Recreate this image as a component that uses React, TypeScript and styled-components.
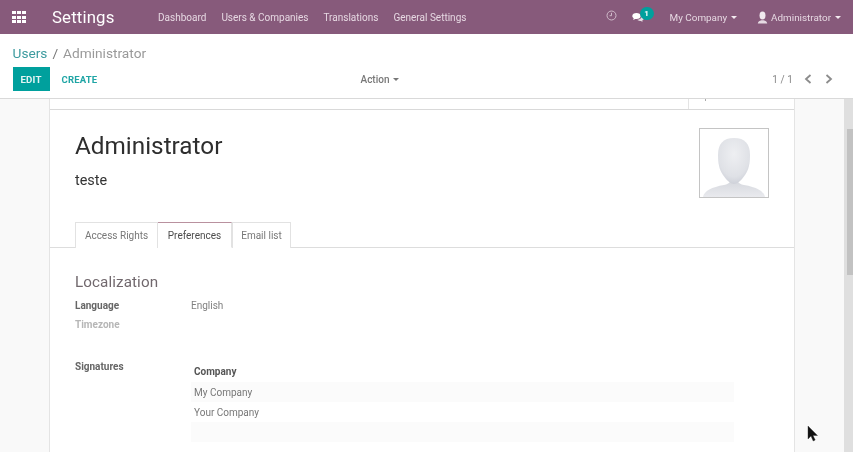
import React from 'react';
import styled, { createGlobalStyle } from 'styled-components';

const GlobalStyle = createGlobalStyle`
  html, body {
    margin: 0;
    padding: 0;
    overflow: hidden;
    background: #fff;
  }
  body {
    font-family: Roboto, "Noto Sans", sans-serif;
    font-size: 10px;
    color: #666;
  }
`;

const Page = styled.div`
  position: relative;
  width: 853px;
  height: 452px;
  display: flex;
  flex-direction: column;
  overflow: hidden;
  filter: blur(0.35px);
`;

const NavBar = styled.header`
  height: 34px;
  flex: none;
  display: flex;
  align-items: center;
  background: #875a7b;
  color: #fff;
`;

const AppsButton = styled.div`
  width: 14px;
  height: 12px;
  margin: 0 26px 0 12px;
  display: grid;
  grid-template-columns: repeat(3, 4px);
  grid-auto-rows: 3px;
  gap: 1.5px 1px;
`;

const AppsDot = styled.span`
  background: #fff;
`;

const BrandName = styled.div`
  width: 106px;
  font-size: 16.8px;
  line-height: 34px;
  letter-spacing: 0.15px;
`;

const NavMenu = styled.nav`
  display: flex;
  gap: 15px;
  flex: 1;
`;

const NavLink = styled.span`
  font-size: 10px;
  color: #e6d8e2;
`;

const NavTools = styled.div`
  display: flex;
  align-items: center;
`;

const ClockWrap = styled.div`
  display: flex;
  margin: -3px 15px 0 0;
  color: #d0bbca;
`;

const Messages = styled.div`
  position: relative;
  display: flex;
  width: 22px;
  margin-right: 16px;
`;

const Badge = styled.span`
  position: absolute;
  left: 8px;
  top: -5px;
  width: 14px;
  height: 13px;
  border-radius: 7px;
  background: #00a09d;
  color: #fff;
  font-size: 8px;
  font-weight: 700;
  line-height: 13px;
  text-align: center;
`;

const UserMenu = styled.span<{ $gap: number }>`
  display: flex;
  align-items: center;
  font-size: 9.9px;
  color: #e6d8e2;
  margin-right: ${p => p.$gap}px;
`;

const Caret = styled.i<{ $color?: string }>`
  display: inline-block;
  width: 0;
  height: 0;
  margin-left: 4px;
  border-top: 3px solid ${p => p.$color || '#f3eaf0'};
  border-left: 3px solid transparent;
  border-right: 3px solid transparent;
`;

const ControlPanel = styled.section`
  height: 65px;
  flex: none;
  box-sizing: border-box;
  padding: 0 20px 0 12.5px;
  background: #fff;
  border-bottom: 1px solid #d9d9d9;
`;

const Breadcrumb = styled.div`
  height: 33px;
  box-sizing: border-box;
  padding-top: 5px;
  display: flex;
  align-items: center;
  font-size: 13.7px;
  color: #999;
`;

const BreadcrumbLink = styled.span`
  color: #3d9b9f;
`;

const BreadcrumbSep = styled.span`
  margin: 0 5px;
  color: #777;
`;

const ActionRow = styled.div`
  display: grid;
  grid-template-columns: 348px auto 1fr;
  align-items: center;
`;

const ButtonGroup = styled.div`
  display: flex;
  align-items: center;
`;

const EditButton = styled.button`
  width: 37px;
  height: 24px;
  padding: 0;
  border: 0;
  background: #00a09d;
  color: #e3f4f3;
  font: 700 9.7px Roboto, sans-serif;
  letter-spacing: 0.2px;
`;

const CreateButton = styled.span`
  margin-left: 12px;
  color: #1fa5a5;
  font-size: 9.5px;
  font-weight: 700;
  letter-spacing: 0.2px;
`;

const ActionMenu = styled.span`
  display: flex;
  align-items: center;
  color: #777;
  font-size: 10px;
  font-weight: 500;
`;

const Pager = styled.div`
  justify-self: end;
  display: flex;
  align-items: center;
  color: #888;
  font-size: 10px;
  letter-spacing: 0.1px;
`;

const PagerArrows = styled.div`
  display: flex;
  gap: 13px;
  margin-left: 11px;
`;

const Body = styled.main`
  flex: 1;
  min-height: 0;
  display: flex;
  background: #f9f9f9;
`;

const Scroller = styled.div`
  flex: 1;
  display: flex;
  padding-left: 49px;
  min-width: 0;
`;

const Sheet = styled.article`
  width: 746px;
  flex: none;
  background: #fff;
  border-left: 1px solid #e4e4e4;
  border-right: 1px solid #e4e4e4;
  box-sizing: border-box;
`;

const ButtonBox = styled.div`
  height: 10px;
  border-bottom: 1px solid #d9d9d9;
  display: flex;
  justify-content: flex-end;
`;

const StatButtonEdge = styled.div`
  width: 105px;
  border-left: 1px solid #e4e4e4;
  position: relative;

  &::after {
    content: '';
    position: absolute;
    left: 16px;
    top: 0;
    width: 1px;
    height: 2px;
    background: #aaa;
  }
`;

const SheetHead = styled.div`
  display: flex;
  justify-content: space-between;
  height: 94px;
  padding: 18px 25px 0 25px;
`;

const Title = styled.h1`
  margin: 0;
  font-size: 24.3px;
  font-weight: 400;
  line-height: 36px;
  color: #2e2e2e;
`;

const SubTitle = styled.div`
  margin-top: 7px;
  font-size: 14.4px;
  line-height: 20px;
  color: #333;
`;

const Avatar = styled.div`
  width: 70px;
  height: 70px;
  box-sizing: border-box;
  border: 1px solid #c4c4c4;
  background: #fff;
  overflow: hidden;
`;

const TabBar = styled.div`
  height: 26px;
  box-sizing: border-box;
  display: flex;
  padding-left: 25px;
  border-bottom: 1px solid #ddd;
`;

const Tab = styled.div<{ $active?: boolean; $width: number }>`
  width: ${p => p.$width}px;
  height: 26px;
  box-sizing: border-box;
  display: flex;
  align-items: center;
  justify-content: center;
  font-size: 10px;
  color: ${p => (p.$active ? '#4c4c4c' : '#777')};
  background: #fff;
  border: 1px solid #e2e2e2;
  border-left-width: ${p => (p.$active ? 0 : 1)}px;
  border-top: ${p => (p.$active ? '1px solid #b9919f' : '1px solid #e2e2e2')};
  border-bottom: ${p => (p.$active ? '1px solid #fff' : '0')};
`;

const TabBody = styled.div`
  padding: 23px 60px 0 25px;
`;

const GroupTitle = styled.h2`
  margin: 0;
  font-size: 15.2px;
  font-weight: 400;
  line-height: 22px;
  color: #71686d;
  letter-spacing: 0.1px;
`;

const FieldRow = styled.div<{ $height: number }>`
  display: grid;
  grid-template-columns: 116px 1fr;
  height: ${p => p.$height}px;
  align-items: start;
`;

const FieldLabel = styled.label<{ $muted?: boolean }>`
  font-size: 10px;
  font-weight: 700;
  line-height: 14px;
  color: ${p => (p.$muted ? '#b6b6b6' : '#666')};
`;

const FieldValue = styled.span`
  font-size: 10px;
  line-height: 14px;
  color: #808080;
`;

const Fields = styled.div`
  margin-top: 6px;
`;

const SignatureTable = styled.table`
  width: 543px;
  margin-top: 1px;
  border-collapse: collapse;
  font-size: 10px;
`;

const HeadCell = styled.th`
  height: 21px;
  padding: 0 3px;
  text-align: left;
  font-weight: 700;
  color: #555;
`;

const Cell = styled.td<{ $shaded?: boolean }>`
  height: 20px;
  padding: 0 3px;
  color: #777;
  background: ${p => (p.$shaded ? '#fbfbfb' : '#fff')};
`;

const ScrollTrack = styled.div`
  width: 9px;
  flex: none;
  background: #dfdfdf;
  display: flex;
  justify-content: flex-end;
`;

const ScrollThumb = styled.div`
  width: 6px;
  height: 146px;
  margin-top: 30px;
  background: #c2c2c2;
`;

const Pointer = styled.svg`
  position: absolute;
  left: 807px;
  top: 426px;
`;

const Chevron: React.FC<{ dir: 'left' | 'right' }> = ({ dir }) => (
  <svg width="8" height="10" viewBox="0 0 8 10" fill="none" stroke="#8c8c8c" strokeWidth="1.8">
    <path d={dir === 'left' ? 'M6.5 1 2 5l4.5 4' : 'M1.5 1 6 5 1.5 9'} />
  </svg>
);

const AvatarArt: React.FC = () => (
  <svg width="68" height="68" viewBox="0 0 68 68">
    <defs>
      <radialGradient id="faceFill" cx="50%" cy="35%" r="70%">
        <stop offset="0%" stopColor="#eeeff2" />
        <stop offset="70%" stopColor="#dfe1e6" />
        <stop offset="100%" stopColor="#c9ccd5" />
      </radialGradient>
      <linearGradient id="bodyFill" x1="0" y1="0" x2="0" y2="1">
        <stop offset="0%" stopColor="#d6d8de" />
        <stop offset="100%" stopColor="#e9eaee" />
      </linearGradient>
    </defs>
    <path d="M3 68c1-6 9-10 21-12 3-.5 6-2 6-4h8c0 2 3 3.500 6 4 12 2 20 6 21 12z" fill="url(#bodyFill)" />
    <path d="M34 9c-11 0-16 6-16 17 0 8 1 14 5 20 4 6 8 9 11 9s7-3 11-9c4-6 5-12 5-20 0-11-5-17-16-17z" fill="url(#faceFill)" />
  </svg>
);

const ClockIcon: React.FC = () => (
  <svg width="11" height="11" viewBox="0 0 11 11" fill="none" stroke="currentColor" strokeWidth="1">
    <circle cx="5.5" cy="5.5" r="4.5" />
    <path d="M5.5 2.8v2.9H3.6" />
  </svg>
);

const ChatIcon: React.FC = () => (
  <svg width="12" height="11" viewBox="0 0 12 11" fill="#fff">
    <path d="M4.5 1C2 1 .3 2.3.3 4c0 1 .6 1.8 1.4 2.3L1.2 8l2-1.1c.4.1.8.1 1.3.1 2.4 0 4.2-1.3 4.2-3S6.9 1 4.5 1z" />
    <path d="M9.6 4.2c0 2-1.9 3.5-4.3 3.6.6.7 1.6 1.1 2.7 1.1l1 .1 1.5 1-.3-1.4c.9-.4 1.5-1.1 1.5-1.900 0-1-.8-1.900-2.100-2.500z" opacity="0.8" />
  </svg>
);

const UserIcon: React.FC = () => (
  <svg width="11" height="13" viewBox="0 0 11 13" style={{ marginRight: 3 }}>
    <ellipse cx="5.5" cy="4.4" rx="3" ry="4" fill="#f0e8ee" />
    <path d="M.8 12.5c.2-2 1.800-2.700 3.500-3.200h2.400c1.700.5 3.300 1.200 3.500 3.200z" fill="#e6dae3" />
  </svg>
);

const App: React.FC = () => {
  const appDots = Array.from({ length: 9 });
  const navItems = ['Dashboard', 'Users & Companies', 'Translations', 'General Settings'];

  return (
    <Page>
      <GlobalStyle />
      <NavBar>
        <AppsButton>
          {appDots.map((_, i) => <AppsDot key={i} />)}
        </AppsButton>
        <BrandName>Settings</BrandName>
        <NavMenu>
          {navItems.map(item => <NavLink key={item}>{item}</NavLink>)}
        </NavMenu>
        <NavTools>
          <ClockWrap><ClockIcon /></ClockWrap>
          <Messages>
            <ChatIcon />
            <Badge>1</Badge>
          </Messages>
          <UserMenu $gap={20}>My Company<Caret /></UserMenu>
          <UserMenu $gap={12}><UserIcon />Administrator<Caret /></UserMenu>
        </NavTools>
      </NavBar>

      <ControlPanel>
        <Breadcrumb>
          <BreadcrumbLink>Users</BreadcrumbLink>
          <BreadcrumbSep>/</BreadcrumbSep>
          Administrator
        </Breadcrumb>
        <ActionRow>
          <ButtonGroup>
            <EditButton>EDIT</EditButton>
            <CreateButton>CREATE</CreateButton>
          </ButtonGroup>
          <ActionMenu>Action<Caret $color="#777" /></ActionMenu>
          <Pager>
            1 / 1
            <PagerArrows>
              <Chevron dir="left" />
              <Chevron dir="right" />
            </PagerArrows>
          </Pager>
        </ActionRow>
      </ControlPanel>

      <Body>
        <Scroller>
          <Sheet>
            <ButtonBox><StatButtonEdge /></ButtonBox>
            <SheetHead>
              <div>
                <Title>Administrator</Title>
                <SubTitle>teste</SubTitle>
              </div>
              <Avatar><AvatarArt /></Avatar>
            </SheetHead>
            <TabBar>
              <Tab $width={83}>Access Rights</Tab>
              <Tab $active $width={74}>Preferences</Tab>
              <Tab $width={59}>Email list</Tab>
            </TabBar>
            <TabBody>
              <GroupTitle>Localization</GroupTitle>
              <Fields>
                <FieldRow $height={19}>
                  <FieldLabel>Language</FieldLabel>
                  <FieldValue>English</FieldValue>
                </FieldRow>
                <FieldRow $height={42}>
                  <FieldLabel $muted>Timezone</FieldLabel>
                  <span />
                </FieldRow>
                <FieldRow $height={90}>
                  <FieldLabel>Signatures</FieldLabel>
                  <SignatureTable>
                    <thead>
                      <tr><HeadCell>Company</HeadCell></tr>
                    </thead>
                    <tbody>
                      <tr><Cell $shaded>My Company</Cell></tr>
                      <tr><Cell>Your Company</Cell></tr>
                      <tr><Cell $shaded /></tr>
                    </tbody>
                  </SignatureTable>
                </FieldRow>
              </Fields>
            </TabBody>
          </Sheet>
        </Scroller>
        <ScrollTrack><ScrollThumb /></ScrollTrack>
      </Body>

      <Pointer width="11" height="16" viewBox="0 0 11 16">
        <path d="M1 0v13l3-3 2.2 5 2-1L6 9.5h4.5z" fill="#111" stroke="#333" strokeWidth="0.4" />
      </Pointer>
    </Page>
  );
};

export default App;
